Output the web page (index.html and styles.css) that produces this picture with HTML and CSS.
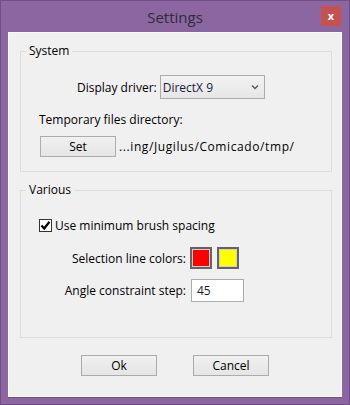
FILE: index.html
```html
<!doctype html>
<html>
    <head>
        <meta charset="utf-8">
        <title>Settings</title>
        <link rel="stylesheet" href="styles.css">
    </head>
    <body>
        <div id="window">
            <div id="titlebar">
                <span id="title">Settings</span>
                <span id="close">x</span>
            </div>
            <div id="client">
                <!-- System -->
                <fieldset class="group system">
                    <legend>System</legend>
                    <div class="driver-row">
                        <span class="label">Display driver:</span>
                        <div class="combo">
                            <span>DirectX 9</span>
                            <svg width="8" height="6" viewBox="0 0 8 6"><path d="M1 1.5 L4 4.5 L7 1.5" fill="none" stroke="#555" stroke-width="1.3"/></svg>
                        </div>
                    </div>
                    <div class="temp-label">Temporary files directory:</div>
                    <div class="temp-row">
                        <button class="btn set">Set</button>
                        <span class="path">...ing/Jugilus/Comicado/tmp/</span>
                    </div>
                </fieldset>

                <!-- Various -->
                <fieldset class="group various">
                    <legend>Various</legend>
                    <div class="check-row">
                        <span class="checkbox">
                            <svg width="11" height="11" viewBox="0 0 11 11"><path d="M1.5 5.5 L4.2 8.5 L9.5 1.8" fill="none" stroke="#000" stroke-width="2.2"/></svg>
                        </span>
                        <span>Use minimum brush spacing</span>
                    </div>
                    <div class="form">
                        <span class="label">Selection line colors:</span>
                        <div class="swatches">
                            <span class="swatch" style="background: #ff0000"></span>
                            <span class="swatch" style="background: #ffff00"></span>
                        </div>
                        <span class="label">Angle constraint step:</span>
                        <div class="input">45</div>
                    </div>
                </fieldset>

                <div class="buttons">
                    <button class="btn wide">Ok</button>
                    <button class="btn wide">Cancel</button>
                </div>
            </div>
        </div>
    </body>
</html>
```
FILE: styles.css
```css
* {
    margin: 0;
    padding: 0;
    box-sizing: border-box;
}
body {
    background: #8c66a0;
    font-family: "Open Sans", "Noto Sans", sans-serif;
    font-size: 12px;
    color: #000;
}
#window {
    width: 350px;
    height: 405px;
    border: 1px solid #6f4f86;
    background: #8c66a0;
    display: flex;
    flex-direction: column;
}
#titlebar {
    height: 31px;
    display: flex;
    align-items: center;
    justify-content: center;
    position: relative;
}
#title {
    font-size: 15px;
    color: #2c2c3a;
}
#close {
    position: absolute;
    right: 8px;
    top: 5px;
    width: 20px;
    height: 20px;
    background: #c75050;
    color: #fff;
    font-weight: bold;
    font-size: 11px;
    line-height: 19px;
    text-align: center;
}
#client {
    margin: 0 7px 0 7px;
    height: 365px;
    background: #f0f0f0;
    border: 1px solid #fafafa;
    box-shadow: 0 1px 0 #6f4f86;
    padding: 10px 10px 0 11px;
}
.group {
    border: 1px solid #dcdcdc;
    padding: 0;
    width: 312px;
}
.group legend {
    margin-left: 5px;
    padding: 0 3px;
    line-height: 16px;
}
.system {
    padding-bottom: 14px;
}
.driver-row {
    margin-top: 16px;
    display: flex;
    align-items: center;
    padding-left: 56px;
}
.driver-row .label {
    margin-right: 3px;
}
.combo {
    width: 105px;
    height: 24px;
    border: 1px solid #acacac;
    background: linear-gradient(#f2f2f2, #e6e6e6);
    display: flex;
    align-items: center;
    justify-content: space-between;
    padding: 0 5px 0 2px;
    color: #1a1a3a;
}
.temp-label {
    margin-top: 13px;
    padding-left: 18px;
    line-height: 16px;
}
.temp-row {
    margin-top: 8px;
    display: flex;
    align-items: center;
    padding-left: 19px;
}
.btn {
    font-family: inherit;
    font-size: 12px;
    color: #000;
    border: 1px solid #acacac;
    background: linear-gradient(#f0f0f0, #e5e5e5);
    height: 21px;
}
.set {
    width: 76px;
}
.path {
    margin-left: 3px;
    letter-spacing: 0.6px;
}
.various {
    margin-top: 10px;
    padding-bottom: 35px;
}
.check-row {
    margin-top: 19px;
    padding-left: 18px;
    display: flex;
    align-items: center;
    height: 16px;
}
.checkbox {
    width: 13px;
    height: 13px;
    border: 1px solid #333;
    background: #fff;
    display: flex;
    align-items: center;
    justify-content: center;
    margin-right: 3px;
}
.form {
    margin-top: 14px;
    display: grid;
    grid-template-columns: 165px auto;
    column-gap: 4px;
    row-gap: 10px;
    align-items: center;
}
.form .label {
    text-align: right;
}
.swatches {
    display: flex;
    gap: 5px;
}
.swatch {
    width: 22px;
    height: 22px;
    border: 2px solid #646464;
    box-shadow: inset 0 0 0 1px #cfcfcf;
}
.input {
    width: 53px;
    height: 23px;
    margin-left: 1px;
    border: 1px solid #acacac;
    background: #fff;
    padding: 2px 0 0 5px;
    color: #1a1a3a;
}
.buttons {
    margin-top: 17px;
    display: flex;
    justify-content: center;
    gap: 36px;
    padding-right: 1px;
}
.wide {
    width: 76px;
    height: 21px;
}
```
